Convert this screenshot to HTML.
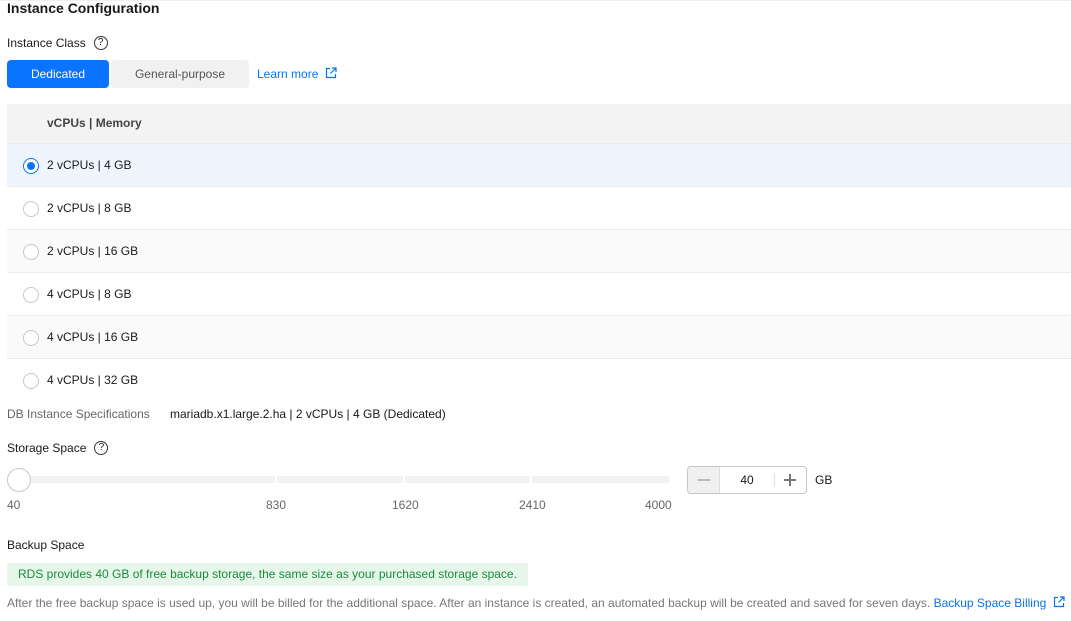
<!DOCTYPE html>
<html><head><style>
*{margin:0;padding:0;box-sizing:border-box}
body{width:1071px;height:621px;overflow:hidden;background:#fff;font-family:"Liberation Sans",Arial,sans-serif;font-size:12px;color:#191919;position:relative}
.a{position:absolute;white-space:nowrap;line-height:14px}
.q{display:inline-block;width:14px;height:14px;border:1px solid #333;border-radius:50%;font-size:10px;line-height:12px;text-align:center;font-weight:normal;vertical-align:middle;margin-left:8px;margin-top:-2px}
.row{position:absolute;left:7px;width:1064px;height:43px;border-bottom:1px solid #ebebeb}
.row .r{position:absolute;left:16px;top:14px;width:16px;height:16px;border:1px solid #c7c7c7;border-radius:50%;background:#fff}
.row .t{position:absolute;left:40px;top:14px;line-height:14px}
.lbl{color:#666}
.tk{position:absolute;top:498px;color:#666;line-height:14px}
.link{color:#0a73e8}
</style></head><body>
<div style="position:absolute;left:0;top:0;width:1071px;height:1px;background:#f0f0f0"></div>
<div class="a" style="left:7px;top:0px;font-size:14px;font-weight:bold;line-height:16px">Instance Configuration</div>
<div class="a" style="left:7px;top:36px">Instance Class<span class="q">?</span></div>
<div style="position:absolute;left:7px;top:60px;width:102px;height:28px;background:#0a73ff;border-radius:4px;color:#fff;text-align:center;line-height:28px">Dedicated</div>
<div style="position:absolute;left:111px;top:60px;width:138px;height:28px;background:#f1f1f1;border-radius:4px;color:#555;text-align:center;line-height:28px">General-purpose</div>
<div class="a link" style="left:257px;top:67px">Learn more <svg width="12" height="12" viewBox="0 0 12 12" style="vertical-align:-1px;margin-left:3px"><path d="M5 1.5H1.5v9h9V7M7 1H11V5M11 1L5.5 6.5" fill="none" stroke="#0a73e8" stroke-width="1.2"/></svg></div>

<div style="position:absolute;left:7px;top:104px;width:1064px;height:40px;background:#f3f3f3;border-bottom:1px solid #ebebeb"></div>
<div class="a" style="left:47px;top:116px;font-weight:bold;color:#444">vCPUs | Memory</div>

<div class="row" style="top:144px;background:#eef5ff"><div class="r" style="border-color:#0a73ff"><div style="position:absolute;left:3px;top:3px;width:8px;height:8px;border-radius:50%;background:#0a73ff"></div></div><div class="t">2 vCPUs | 4 GB</div></div>
<div class="row" style="top:187px"><div class="r"></div><div class="t">2 vCPUs | 8 GB</div></div>
<div class="row" style="top:230px;background:#fafafa"><div class="r"></div><div class="t">2 vCPUs | 16 GB</div></div>
<div class="row" style="top:273px"><div class="r"></div><div class="t">4 vCPUs | 8 GB</div></div>
<div class="row" style="top:316px;background:#fafafa"><div class="r"></div><div class="t">4 vCPUs | 16 GB</div></div>
<div class="row" style="top:359px;border-bottom:none"><div class="r"></div><div class="t">4 vCPUs | 32 GB</div></div>

<div class="a lbl" style="left:7px;top:407px">DB Instance Specifications</div>
<div class="a" style="left:170px;top:407px">mariadb.x1.large.2.ha | 2 vCPUs | 4 GB (Dedicated)</div>
<div class="a" style="left:7px;top:441px">Storage Space<span class="q">?</span></div>

<div style="position:absolute;left:8px;top:476px;width:662px;height:7px;background:#f3f3f3;border-radius:4px"></div>
<div style="position:absolute;left:275px;top:474px;width:2px;height:11px;background:#fff"></div>
<div style="position:absolute;left:403px;top:474px;width:2px;height:11px;background:#fff"></div>
<div style="position:absolute;left:530px;top:474px;width:2px;height:11px;background:#fff"></div>
<div style="position:absolute;left:7px;top:468px;width:24px;height:24px;border-radius:50%;background:#fff;border:1px solid #c7c7c7"></div>
<div class="tk" style="left:7px">40</div>
<div class="tk" style="left:266px">830</div>
<div class="tk" style="left:392px">1620</div>
<div class="tk" style="left:519px">2410</div>
<div class="tk" style="left:645px">4000</div>

<div style="position:absolute;left:687px;top:466px;width:120px;height:28px;border:1px solid #c7c7c7;border-radius:4px;overflow:hidden">
<div style="position:absolute;left:0;top:0;width:32px;height:26px;background:#f0f0f0;border-right:1px solid #ddd"></div>
<div style="position:absolute;left:10px;top:12px;width:12px;height:1.5px;background:#bbb"></div>
<div style="position:absolute;left:32px;top:6px;width:54px;text-align:center;line-height:14px">40</div>
<div style="position:absolute;left:86px;top:6px;width:1px;height:14px;background:#ddd"></div>
<div style="position:absolute;left:96px;top:12px;width:12px;height:1.5px;background:#777"></div>
<div style="position:absolute;left:101.3px;top:6.5px;width:1.5px;height:12px;background:#777"></div>
</div>
<div class="a" style="left:815px;top:473px">GB</div>

<div class="a" style="left:7px;top:538px">Backup Space</div>
<div style="position:absolute;left:7px;top:563px;width:521px;height:23px;background:#e6f6ea;border-radius:2px;color:#1c8b3a;line-height:23px;padding-left:11px;white-space:nowrap">RDS provides 40 GB of free backup storage, the same size as your purchased storage space.</div>
<div class="a" style="left:7px;top:596px;color:#777">After the free backup space is used up, you will be billed for the additional space. After an instance is created, an automated backup will be created and saved for seven days. <span class="link">Backup Space Billing <svg width="12" height="12" viewBox="0 0 12 12" style="vertical-align:-1px;margin-left:3px"><path d="M5 1.5H1.5v9h9V7M7 1H11V5M11 1L5.5 6.5" fill="none" stroke="#0a73e8" stroke-width="1.2"/></svg></span></div>
</body></html>
